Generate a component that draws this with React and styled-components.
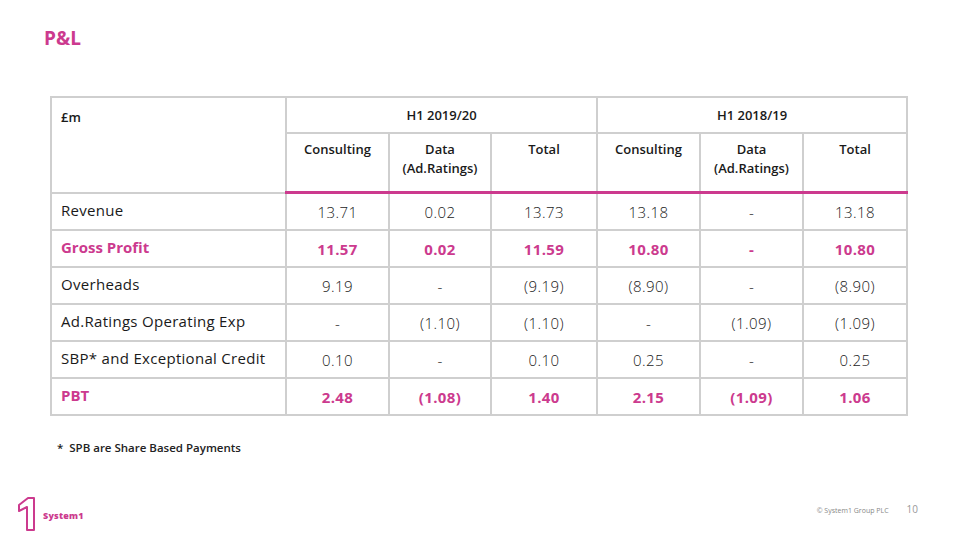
import React from "react";
import styled, { createGlobalStyle } from "styled-components";

const PINK = "#cc3a8e";
const LINE = "#cfcfcf";

const rows = [
  { label: "Revenue", values: ["13.71", "0.02", "13.73", "13.18", "-", "13.18"] },
  { label: "Gross Profit", values: ["11.57", "0.02", "11.59", "10.80", "-", "10.80"], strong: true },
  { label: "Overheads", values: ["9.19", "-", "(9.19)", "(8.90)", "-", "(8.90)"] },
  { label: "Ad.Ratings Operating Exp", values: ["-", "(1.10)", "(1.10)", "-", "(1.09)", "(1.09)"] },
  { label: "SBP* and Exceptional Credit", values: ["0.10", "-", "0.10", "0.25", "-", "0.25"] },
  { label: "PBT", values: ["2.48", "(1.08)", "1.40", "2.15", "(1.09)", "1.06"], strong: true },
];

const subHeads = ["Consulting", "Data\n(Ad.Ratings)", "Total"];

export default function App() {
  return (
    <>
      <GlobalStyle />
      <Page>
        <Title>P&amp;L</Title>
        <Table>
          <colgroup>
            <col style={{ width: 235 }} />
            <col style={{ width: 103 }} />
            <col style={{ width: 102 }} />
            <col style={{ width: 106 }} />
            <col style={{ width: 103 }} />
            <col style={{ width: 103 }} />
            <col style={{ width: 104 }} />
          </colgroup>
          <thead>
            <tr>
              <UnitCell rowSpan={2}>£m</UnitCell>
              <GroupCell colSpan={3}>H1 2019/20</GroupCell>
              <GroupCell colSpan={3}>H1 2018/19</GroupCell>
            </tr>
            <tr>
              {[...subHeads, ...subHeads].map((h, i) => (
                <SubCell key={i}>{h}</SubCell>
              ))}
            </tr>
          </thead>
          <tbody>
            {rows.map((r) => (
              <tr key={r.label}>
                <Label $strong={r.strong}>{r.label}</Label>
                {r.values.map((v, i) => (
                  <Num key={i} $strong={r.strong}>{v}</Num>
                ))}
              </tr>
            ))}
          </tbody>
        </Table>
        <Footnote>* &nbsp;SPB are Share Based Payments</Footnote>
        <Footer>
          <Brand>
            <svg width="20" height="36" viewBox="0 0 20 36">
              <path
                d="M2 9 L11 2 L17 2 L17 34 L10 34 L10 11 L2 15 Z"
                fill="none"
                stroke={PINK}
                strokeWidth="2"
                strokeLinejoin="round"
              />
            </svg>
            <BrandName>System1</BrandName>
          </Brand>
          <Meta>
            <Copy>© System1 Group PLC</Copy>
            <PageNo>10</PageNo>
          </Meta>
        </Footer>
      </Page>
    </>
  );
}

const GlobalStyle = createGlobalStyle`
  body {
    margin: 0;
    background: #fff;
    font-family: "Open Sans", "Liberation Sans", sans-serif;
    color: #1a1a1a;
  }
`;

const Page = styled.div`
  width: 960px;
  height: 540px;
  display: flex;
  flex-direction: column;
  padding-top: 26px;
  box-sizing: border-box;
  overflow: hidden;
`;

const Title = styled.h1`
  margin: 0 0 0 44px;
  font-size: 19px;
  line-height: 24px;
  font-weight: 700;
  color: ${PINK};
`;

const Table = styled.table`
  margin: 46px 0 0 50px;
  width: 856px;
  border-collapse: collapse;
  table-layout: fixed;
  font-size: 15px;

  td, th {
    border: 2px solid ${LINE};
    padding: 0;
  }
`;

const UnitCell = styled.th`
  text-align: left;
  vertical-align: top;
  padding: 10px 0 0 9px !important;
  font-size: 13px;
  font-weight: 600;
`;

const GroupCell = styled.th`
  height: 34px;
  font-size: 13px;
  font-weight: 600;
  text-align: center;
`;

const SubCell = styled.th`
  height: 51px;
  vertical-align: top;
  padding-top: 6px !important;
  white-space: pre-line;
  font-size: 13px;
  font-weight: 600;
  line-height: 19px;
  text-align: center;
  border-bottom: 3px solid ${PINK} !important;
`;

const Label = styled.td`
  height: 33px;
  padding-left: 9px !important;
  padding-bottom: 2px !important;
  color: ${(p) => (p.$strong ? PINK : "#1a1a1a")};
  font-weight: ${(p) => (p.$strong ? 700 : 400)};
  letter-spacing: ${(p) => (p.$strong ? "0" : "0.3px")};
  white-space: nowrap;
`;

const Num = styled.td`
  text-align: center;
  padding-top: 2px !important;
  color: ${(p) => (p.$strong ? PINK : "#1a1a1a")};
  font-weight: ${(p) => (p.$strong ? 700 : 300)};
  letter-spacing: 0.4px;
`;

const Footnote = styled.div`
  margin: 24px 0 0 57px;
  font-size: 11.5px;
  line-height: 16px;
  font-weight: 600;
  color: #222;
`;

const Footer = styled.div`
  margin-top: auto;
  display: flex;
  align-items: flex-end;
  justify-content: space-between;
  padding: 0 42px 8px 17px;
`;

const Brand = styled.div`
  display: flex;
  align-items: flex-end;
  gap: 6px;
`;

const BrandName = styled.span`
  font-size: 9px;
  font-weight: 800;
  color: ${PINK};
  margin-bottom: 10px;
  letter-spacing: 0.2px;
`;

const Meta = styled.div`
  display: flex;
  align-items: baseline;
  gap: 18px;
  margin-bottom: 16px;
`;

const Copy = styled.span`
  font-size: 7px;
  color: #888;
`;

const PageNo = styled.span`
  font-size: 10px;
  color: #999;
`;
